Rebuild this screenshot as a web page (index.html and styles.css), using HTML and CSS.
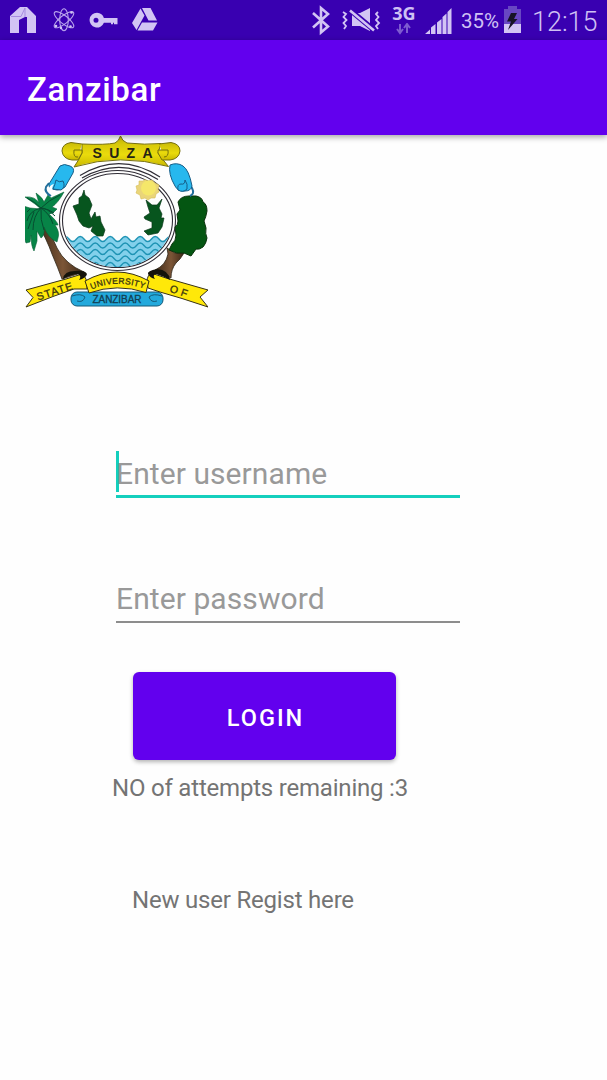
FILE: index.html
```
<!DOCTYPE html>
<html lang="en">
<head>
<meta charset="utf-8">
<title>Zanzibar</title>
<link rel="stylesheet" href="styles.css">
</head>
<body>
<header class="status">
  <div class="notifications">
    <svg class="icon" width="28" height="40" viewBox="9 0 28 40"><path d="M10 33V16L20 7h7l9 9v17h-9V17h-2v16z"/><path class="gap" d="M19 20l6-3v16h-6z"/><path class="fold" d="M11 16.500h10l4-8.500v9"/></svg>
    <svg class="icon atom" width="22" height="40" viewBox="53 0 22 40"><g><ellipse cx="64" cy="19.700" rx="4.300" ry="11"/><ellipse cx="64" cy="19.700" rx="4" ry="12" transform="rotate(52 64 19.700)"/><ellipse cx="64" cy="19.700" rx="4" ry="12" transform="rotate(-52 64 19.700)"/></g><circle cx="71.500" cy="12.500" r="1.300"/><circle cx="56" cy="26" r="1.300"/><circle cx="70.500" cy="26.500" r="1.300"/><circle cx="61" cy="28" r="1.200"/></svg>
    <svg class="icon key" width="30" height="40" viewBox="89 0 30 40"><path fill-rule="evenodd" d="M97 12.700a7.400 7.400 0 1 0 6.900 10H111v1.500h2v-1.500h1v1.500h3.500v-6.200h-13.600A7.400 7.400 0 0 0 97 12.700zm-1 5a2.500 2.500 0 1 1 0 5 2.500 2.500 0 0 1 0-5z"/></svg>
    <svg class="icon" width="27" height="40" viewBox="131 0 27 40"><path d="M140.500 8.500l4 7-8 14.500-4.500-7zM142 8h8.500l6.500 12.500h-8.500zM142 22.500h15.500L153 30.500h-15.500z"/></svg>
  </div>
  <div class="system">
    <svg class="icon" width="19" height="40" viewBox="312 0 19 40"><path class="stroke wide" d="M313 13l15 13.500-7 6V8l7 6L313 27.500"/></svg>
    <svg class="icon mute" width="40" height="40" viewBox="342 0 40 40"><path class="stroke" d="M343 12l3 2-2.500 3 3 3-3 3 2.500 3-2 3M378 12l-2 2 2.500 3-2.500 3 3 3-3 3 2 3"/><path d="M352 13h8l10-5v23l-10-5h-8z"/><path class="slash" d="M350 10l24 20"/><path class="stroke wide" d="M350 10.500l24 20"/></svg>
    <div class="network"><span>3G</span><svg class="icon" width="16" height="12" viewBox="397 23 16 12"><path class="data" d="M401 24v8m-3-3l3 4 3-4M408 33v-8m-3 3l3-4 3 4"/></svg></div>
    <svg class="icon signal" width="27" height="40" viewBox="425 0 27 40"><path d="M425 34l5-4.500V34zM431 27.500l4.500-3.500v10H431zM437 22.500l4.500-3.500v15H437zM442.500 17l4-3.500V34h-4zM447.500 12l4-4V34h-4z"/></svg>
    <span class="percent">35%</span>
    <svg class="icon battery" width="17" height="40" viewBox="504 0 17 40"><path class="empty" d="M508 6h9v3h4v15h-17V9h4z"/><path d="M504 24h17v9h-17z"/><path class="bolt" d="M511 13h6l-3 6h3.500L508 30l3-8.500h-4z"/></svg>
    <span class="clock">12:15</span>
  </div>
</header>
<div class="appbar"><h1 class="title">Zanzibar</h1></div>
<main class="content">
  <svg class="emblem" width="183" height="173" viewBox="25 135 183 173" role="img" aria-label="State University of Zanzibar">
    <defs>
      <clipPath id="disc"><ellipse cx="117.500" cy="220.500" rx="54.500" ry="46.500"/></clipPath>
      <linearGradient id="gold" x2="0" y2="1"><stop offset="0" stop-color="#c9ba08"/><stop offset=".6" stop-color="#eadb0c"/><stop offset="1" stop-color="#c9b800"/></linearGradient>
      <linearGradient id="bark"><stop offset="0" stop-color="#3d2817"/><stop offset=".55" stop-color="#7c5637"/><stop offset="1" stop-color="#3d2817"/></linearGradient>
      <path id="stateLine" d="M38 300.500L76 288"/>
      <path id="uniLine" d="M91.500 289.500Q118 278 146 289.500"/>
      <path id="ofLine" d="M169 291.500L193 300"/>
      <path id="wave" d="M46.500 240q3.750-5 7.500 0t7.500 0 7.500 0 7.500 0 7.500 0 7.500 0 7.500 0 7.500 0 7.500 0 7.500 0 7.500 0 7.500 0 7.500 0 7.500 0 7.500 0 7.500 0 7.500 0 7.500 0"/>
    </defs>
    <g class="ring"><ellipse cx="117.500" cy="220.500" rx="58" ry="50"/><ellipse cx="117.500" cy="220.500" rx="55" ry="47"/><path d="M80 175.500Q120 151 160 177M82 178Q120 156 158 179.500"/></g>
    <g clip-path="url(#disc)">
      <path class="sea" d="M46.500 239q3.750-5 7.500 0t7.500 0 7.500 0 7.500 0 7.500 0 7.500 0 7.500 0 7.500 0 7.500 0 7.500 0 7.500 0 7.500 0 7.500 0 7.500 0 7.500 0 7.500 0 7.500 0 7.500 0V272H46z"/>
      <g class="waves"><use href="#wave" y="-1"/><use href="#wave" y="5.500"/><use href="#wave" y="12"/><use href="#wave" y="18.500"/><use href="#wave" y="25"/></g>
    </g>
    <path class="rays" d="M145 179.500l3 1.500 4-1 3 3 4 2-1 4 1 3-3 2-1 4-4 0-3 2-3-2-4 1-1-4-4-2 1-3-1-4 3-1 0-4 4 0z"/><circle class="sun" cx="148.500" cy="188" r="7.500"/>
    <path class="land" d="M84 190L85 195 89 198 92 205 89 213 91 219 95 212 96 217 100 216 101 222 105 230 103 236H97L91 231 93 226 89 228 83 226 79 221 77 215 73 206 79 204V198L82 196z"/>
    <path class="land" d="M146 200L152 205H157L162 199 159 208 162 214 161 218H164L162 227 158 233 148 235 144 231 152 228V222L145 219 144 217 150 213 148 207z"/>
    <path class="trunk" d="M37 222q10 18 15 32 6 14 10 25l22-7q-19-8-27-24-6-12-10-24z"/>
    <path class="palm" d="M41 209L35 204 25 197q10-1 14 6l-3-10q7 5 8 9l4-7 3 3L64 192q-6 11-12 15l5 2q-4 5-8 5 8 7 9 11l-3 0q5 7 3 13l-1 4q-9-4-13-15 1 9-3 11l-4-7 0 10-3 10q-3-5-3-16l-1 7-4 1-3-9V206l7 2z"/>
    <path class="leafline" d="M41 208q-6-6-14-10m14 10q8-8 19-13m-19 13q8 1 13 5m-13-5q-12 3-14 13m14-13q-8 8-8 22m8-22q-1 12 3 22m-3-22q9 6 12 16m-12-16q6 0 14 8M34 212l-6 17M30 209l-3 3"/>
    <path class="trunk" d="M167 248l8 5h9q-4 7-8 10-5 6-5 15l-16-8q11-5 13-16z"/>
    <path class="tree" d="M178 202q3-6 11-6l7 0q6 1 7 6 4 2 4 9-1 6-3 10l2 7q-1 6 1 10-1 6-4 9-4 3-7 2l-5 7-7-3-7 0-8-3 3-6q4-3 4-9l-1-8q3-2 3-6l-1-7 3-4z"/>
    <g class="bluecap"><path class="tail" d="M51 196q-7-4-5-9l3-4M190 196q5-2 2-8l-5-6"/><path d="M60 166q4-3 10 0 5 2 3 7l-8 14q-3 3-8 3-9-1-8-6zM170 165q7-3 13 1 6 4 9 20-1 5-7 5-7 1-10-5-7-12-5-21z"/><path d="M53 189q2-4 3-9 3 3 7 1 3 6-2 9zM178 190q-1-6 3-6 4 1 4-4 3 4 2 9-4 4-9 1z"/><path class="glint" d="M49 190q0-5 5-6-3 4-1 8z"/></g>
    <g class="scroll"><path d="M82 144Q106 145 115 143Q119 141 120.500 136Q122 141 127 143Q145 145 161 143.500L158 153Q163 160 168.500 166.500Q120 153 74 167Q79 160 82 153z"/><path d="M82 144L71 142.500Q62 144 62 151Q63 159 72 160H78L82 153V150H74Q73 158 78 157M159 144L171 142.500Q180 144 180 151Q179 159 170 160H162L158 153V150H168Q169 157 164 157"/></g>
    <text class="suza" x="92.500" y="158" textLength="60">SUZA</text>
    <rect class="foot" x="71" y="292" width="92" height="14" rx="6"/><path class="footline" d="M72 296q9-3 13 1-2 6-8 4m85-5q-9-3-13 1 2 6 8 4"/>
    <g class="ribbon"><path d="M26 290L66 279 82 274q6 4 5 15L74 289 53 296.500 26 307L33 297.500z"/><path d="M208 290L166 278 151 273q-6 4-3 15L160 292 182 298.500 208 307L200 297z"/><path d="M85 281Q117 263 149 281l-3 11.500Q117 283 89 293z"/></g>
    <path class="shadow" d="M63 279q1-8 12-8 10-1 12 3-1 4-8 6 3-4-1-6-6 0-15 5zM148 274q-1-3 9-5 12 1 13 11-7-4-14-6-4 1-1 5-5-1-7-5z"/>
    <text class="label"><textPath href="#stateLine" textLength="37">STATE</textPath></text>
    <text class="label small"><textPath href="#uniLine" textLength="54">UNIVERSITY</textPath></text>
    <text class="label"><textPath href="#ofLine" textLength="18">OF</textPath></text>
    <text class="label zan" x="92.500" y="303" textLength="49">ZANZIBAR</text>
  </svg>
  <form class="login">
    <label class="field focused"><span>Enter username</span></label>
    <label class="field"><span>Enter password</span></label>
    <button class="submit" type="button">LOGIN</button>
    <p class="attempts">NO of attempts remaining :3</p>
    <a class="register">New user Regist here</a>
  </form>
</main>
</body>
</html>
```
FILE: styles.css
```
* { box-sizing: border-box; }
body { margin: 0; width: 607px; height: 1080px; overflow: hidden; background: #fefefe; font-family: Roboto, sans-serif; }
.status { height: 40px; display: flex; justify-content: space-between; padding: 0 10px 0 9px; background: #3900b1; color: #cfc0f4; }
.notifications, .system { display: flex; align-items: center; height: 40px; }
.icon { display: block; flex: none; fill: #d2c4f4; }
.gap { fill: #3900b1; }
.fold { fill: none; stroke: #a78be0; }
.atom { margin-left: 16px; }
.atom g { fill: none; stroke: #b9a3ec; stroke-width: 1.1; }
.key { margin: 0 12px 0 14px; }
.stroke { fill: none; stroke: #d2c4f4; stroke-width: 1.8; }
.wide { stroke-width: 2.6; }
.slash { stroke: #3900b1; stroke-width: 5.5; }
.mute { margin-left: 11px; }
.network { width: 24px; height: 40px; margin-left: 10px; padding-top: 3px; display: flex; flex-direction: column; align-items: center; font: 700 18px/20px "Noto Sans", sans-serif; }
.data { fill: none; stroke: #7d5bd0; stroke-width: 2; }
.signal { margin-left: 9px; }
.percent { width: 42px; margin-left: 9px; padding-top: 1px; font-size: 20.500px; line-height: 40px; white-space: nowrap; }
.battery { margin-left: 1px; }
.empty { fill: #6847c3; }
.bolt { fill: #171326; }
.clock { width: 65px; margin-left: 11px; padding-top: 3px; font-size: 27px; font-weight: 300; line-height: 40px; white-space: nowrap; }
.appbar { position: relative; height: 95px; display: flex; align-items: center; padding: 4px 27px 0; background: #6200ee; box-shadow: 0 2px 6px rgba(0,0,0,.36); }
.title { margin: 0; color: #fff; font-size: 33px; font-weight: 500; letter-spacing: .650px; line-height: 40px; }
.content { padding-left: 25px; }
.emblem { display: block; overflow: hidden; }
.ring { fill: #fefefe; stroke: #302d36; stroke-width: 1.1; }
.ring path { fill: none; }
.sea { fill: #82d0eb; }
.waves { fill: none; stroke: #1e93b4; stroke-width: 1.3; }
.rays { fill: #ead579; stroke: #d7bd57; stroke-width: .6; }
.sun { fill: #f5e76a; }
.land { fill: #07551e; stroke: #093818; stroke-width: .7; stroke-linejoin: round; }
.trunk { fill: url(#bark); stroke: #2d2417; stroke-width: .8; }
.palm { fill: #078447; stroke: #086237; stroke-width: .6; }
.leafline { fill: none; stroke: #064d30; stroke-width: 1; }
.tree { fill: #045612; stroke: #09320b; }
.bluecap { fill: #27b8ee; stroke: #175d87; stroke-width: 1; }
.bluecap .tail { fill: none; stroke: #226f9c; stroke-width: 2; }
.bluecap .glint { fill: #fefefe; stroke: none; }
.scroll { fill: url(#gold); stroke: #77700d; stroke-width: 1; }
.suza { font: 700 14px "Liberation Sans", sans-serif; fill: #252414; }
.shadow { fill: #15130b; }
.foot { fill: #23a9dc; stroke: #155a78; }
.footline { fill: none; stroke: #155a78; }
.ribbon { fill: #ffe809; stroke: #383214; stroke-width: 1; }
.label { font: 400 10.500px "Liberation Sans", sans-serif; fill: #383411; stroke: #383411; stroke-width: .3; }
.small { font-size: 8.500px; }
.zan { font-size: 10px; fill: #133e51; stroke: #133e51; }
.login { width: 348px; margin: 143px 0 0 87px; display: flex; flex-direction: column; align-items: flex-start; }
.field { display: block; width: 344px; height: 47px; margin-left: 4px; border-bottom: 2px solid #8d8d8d; color: #999; font-size: 30px; letter-spacing: .080px; line-height: 45px; white-space: nowrap; }
.field + .field { margin-top: 78px; }
.focused { border-bottom: 3px solid #14cfbd; }
.focused::before { content: ""; float: left; width: 3px; height: 41px; margin-right: -3px; background: #14cfbd; }
.submit { width: 263px; height: 88px; margin: 49px 0 0 21px; padding: 3px 0 0 2px; border: 0; border-radius: 6px; background: #6200ee; color: #fff; box-shadow: 0 2px 4px rgba(0,0,0,.3); font: 500 23.500px/28px Roboto, sans-serif; letter-spacing: 2px; }
.attempts { margin: 14px 0 0; color: #747474; font-size: 24px; letter-spacing: -.200px; line-height: 28px; white-space: nowrap; }
.register { margin: 84px 0 0 20px; color: #747474; font-size: 24px; letter-spacing: -.200px; line-height: 28px; white-space: nowrap; }
```
